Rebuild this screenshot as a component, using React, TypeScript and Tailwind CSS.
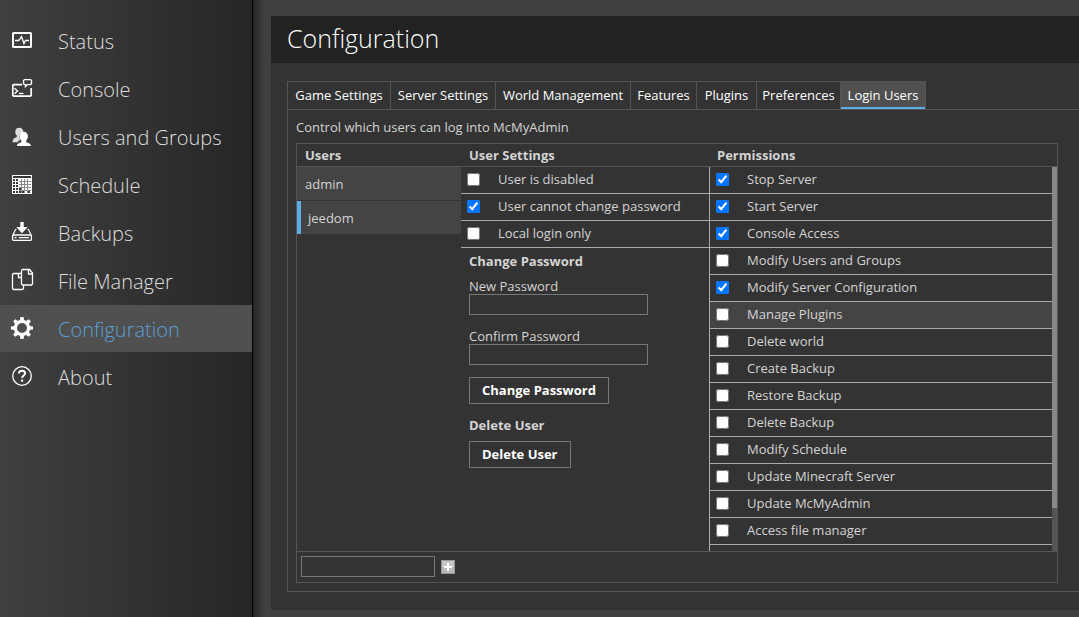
import { useState, type ReactNode } from "react";

type NavItem = { label: string; icon: ReactNode };

const iconClass = "mt-[11px] h-6 w-6 shrink-0 self-start text-white";

const StatusIcon = () => (
  <svg viewBox="0 0 24 24" className={iconClass} fill="none" stroke="currentColor" aria-hidden="true">
    <rect x="3" y="5" width="18" height="14" rx="0.5" strokeWidth="2" />
    <path d="M5 12.5h3.5l1.5-1.5 1.5-2.5 2.5 7 1.5-3H19" strokeWidth="1.3" />
  </svg>
);

const ConsoleIcon = () => (
  <svg viewBox="0 0 24 24" className={iconClass} fill="none" stroke="currentColor" aria-hidden="true">
    <path d="M12 8.6H3.6L2.8 9.400v10l.8.8h16.800l.8-.8V12" strokeWidth="1.700" />
    <path d="M14.500 3.600h6l1 1v3l-1 1h-3l-2 2v-2h-1l-1-1v-3z" strokeWidth="1.400" />
    <path d="M4.500 12.200l3 2.800-3 2.800" strokeWidth="1.400" />
    <path d="M9 17.500h4.500" strokeWidth="1.400" />
  </svg>
);

const UsersIcon = () => (
  <svg viewBox="0 0 24 24" className={iconClass} fill="currentColor" aria-hidden="true">
    <path className="text-[#dcdcdc]" d="M9.2 3.7c2.500 0 4.200 1.700 4.200 4.200-2.700.5-4.400 2.500-4 5.300.2 1.200.5 1.800 1 2.600-1.300.6-2.200 1.300-2.700 2.400H2.500c.1-2.300.8-3.700 2.300-4.300 1.500-.6 2.200-1 2.200-2.100C5.700 10.800 5.300 9.500 5.300 7.700c0-2.500 1.500-4 3.900-4z" />
    <path d="M13.500 7.800c2.700 0 4.400 1.800 4.400 4.500 0 1.800-.7 3.100-1.700 4.100v1c0 .8 1 1.100 2.200 1.700 1.500.6 2.300 1.300 2.500 2.900H6.900c.1-1.600 1-2.300 2.500-2.900 1.200-.5 1.900-.8 1.900-1.700v-1c-1-1-1.900-2.300-1.900-4.100 0-2.700 1.600-4.500 4.100-4.500z" />
  </svg>
);

const calendarRows = [
  [1, 1, 0, 0, 0, 0],
  [1, 1, 0, 0, 0, 0],
  [1, 1, 0, 0, 0, 0],
  [1, 1, 1, 0, 0, 0],
  [1, 1, 1, 1, 0, 1],
];

const ScheduleIcon = () => (
  <svg viewBox="0 0 24 24" className={iconClass} shapeRendering="crispEdges" aria-hidden="true">
    <path fill="currentColor" d="M2 3h20v19H2z" />
    <path fill="#383838" d="M3 4h18v2H3z" />
    <path stroke="#8c8c8c" fill="none" d="M11.500 7v14M14.500 7v14M17.500 7v14M9 9.500h12M9 12.500h12M9 15.500h12M9 18.500h12" />
    {calendarRows.map((row, y) =>
      row.map((dark, x) =>
        dark ? <rect key={`${x}-${y}`} x={3 + x * 3} y={7 + y * 3} width="2" height="2" fill="#383838" /> : null,
      ),
    )}
  </svg>
);

const BackupsIcon = () => (
  <svg viewBox="0 0 24 24" className={iconClass} fill="none" stroke="currentColor" aria-hidden="true">
    <path d="M10.300 2h3.400v5h4L12 13.300 6.300 7h4z" fill="currentColor" stroke="none" />
    <path d="M6.500 9.500H5.500L2.700 15.500M17.500 9.500h1l2.800 6" strokeWidth="1.200" />
    <rect x="2.600" y="15" width="18.800" height="5.400" rx="1.200" strokeWidth="1.300" />
    <path d="M4.500 17.700h2M9 17.700h10" strokeWidth="1.200" />
  </svg>
);

const FilesIcon = () => (
  <svg viewBox="0 0 24 24" className={iconClass} fill="none" stroke="currentColor" strokeWidth="1.300" aria-hidden="true">
    <path d="M11.500 5.500H3.500l-1 1v14l1 1h9l1-1v-3" />
    <path d="M8.500 5.500v4h3" />
    <path d="M12.500 1.500h7l3 3.500v11l-1 1h-9l-1-1v-13.500z" />
    <path d="M18.500 1.500V6h4" />
  </svg>
);

const teeth = [0, 45, 90, 135, 180, 225, 270, 315];

const GearIcon = () => (
  <svg viewBox="0 0 24 24" className={iconClass} fill="currentColor" aria-hidden="true">
    <circle cx="12" cy="12" r="6.600" fill="none" stroke="currentColor" strokeWidth="3.200" />
    {teeth.map((a) => (
      <path key={a} d="M9.900 4.500L10.500 1h3l.6 3.500z" transform={`rotate(${a} 12 12)`} />
    ))}
  </svg>
);

const AboutIcon = () => (
  <svg viewBox="0 0 24 24" className={iconClass} fill="none" stroke="currentColor" aria-hidden="true">
    <circle cx="12" cy="12" r="9.300" strokeWidth="1.300" />
    <path d="M8.900 9.600c0-1.900 1.200-2.900 3.100-2.900s3.100 1 3.100 2.600c0 2.200-3 2.200-3 4.700" strokeWidth="1.900" />
    <path d="M11 15.500h2.200v2.200H11z" fill="currentColor" stroke="none" />
  </svg>
);

const navItems: NavItem[] = [
  { label: "Status", icon: <StatusIcon /> },
  { label: "Console", icon: <ConsoleIcon /> },
  { label: "Users and Groups", icon: <UsersIcon /> },
  { label: "Schedule", icon: <ScheduleIcon /> },
  { label: "Backups", icon: <BackupsIcon /> },
  { label: "File Manager", icon: <FilesIcon /> },
  { label: "Configuration", icon: <GearIcon /> },
  { label: "About", icon: <AboutIcon /> },
];

const tabs = [
  { name: "Game Settings", width: "w-[103px]" },
  { name: "Server Settings", width: "w-[105px]" },
  { name: "World Management", width: "w-[135px]" },
  { name: "Features", width: "w-[66px]" },
  { name: "Plugins", width: "w-[60px]" },
  { name: "Preferences", width: "w-[84px]" },
  { name: "Login Users", width: "w-[86px]" },
];

const userSettings = [
  { label: "User is disabled", on: false },
  { label: "User cannot change password", on: true },
  { label: "Local login only", on: false },
];

const permissions = [
  { label: "Stop Server", on: true },
  { label: "Start Server", on: true },
  { label: "Console Access", on: true },
  { label: "Modify Users and Groups", on: false },
  { label: "Modify Server Configuration", on: true },
  { label: "Manage Plugins", on: false, active: true },
  { label: "Delete world", on: false },
  { label: "Create Backup", on: false },
  { label: "Restore Backup", on: false },
  { label: "Delete Backup", on: false },
  { label: "Modify Schedule", on: false },
  { label: "Update Minecraft Server", on: false },
  { label: "Update McMyAdmin", on: false },
  { label: "Access file manager", on: false },
];

function CheckRow({ label, on, active = false }: { label: string; on: boolean; active?: boolean }) {
  return (
    <label
      className={`flex h-[27px] shrink-0 items-center gap-[18px] border-b border-[#aaa] pl-1.5 hover:bg-[#444] ${
        active ? "bg-[#444]" : ""
      }`}
    >
      <input type="checkbox" defaultChecked={on} className="mb-0.5 h-[13px] w-[13px] shrink-0" />
      {label}
    </label>
  );
}

function PasswordField({ id, label }: { id: string; label: string }) {
  return (
    <div className="flex h-[50px] flex-col">
      <label htmlFor={id} className="leading-4">
        {label}
      </label>
      <input id={id} type="password" className="h-[21px] w-[179px] border border-[#777] bg-transparent px-1" />
    </div>
  );
}

function Sidebar() {
  return (
    <nav className="w-[253px] shrink-0 border-r border-black bg-linear-to-r from-[#404040] to-[#262626] pt-[17px]">
      <ul className="flex flex-col gap-px">
        {navItems.map(({ label, icon }) => {
          const current = label === "Configuration";
          return (
            <li key={label}>
              <a
                href="#"
                aria-current={current ? "page" : undefined}
                className={`flex h-[47px] items-center gap-6 pl-2.5 text-xl font-light ${
                  current ? "bg-[#505050] text-[#5b9fd6]" : "text-[#dedede]"
                }`}
              >
                {icon}
                <span className="pt-0.5">{label}</span>
              </a>
            </li>
          );
        })}
      </ul>
    </nav>
  );
}

export default function App() {
  const [tab, setTab] = useState("Login Users");
  const [user, setUser] = useState("jeedom");

  return (
    <div className="flex min-h-screen bg-[#404040] font-['Open_Sans','Noto_Sans',sans-serif] text-[13px] text-[#d4d4d4]">
      <Sidebar />
      <main className="min-w-0 flex-1 bg-linear-to-r from-[#262626] to-[#404040] to-[12px] pt-4 pb-[7px] pl-[18px]">
        <section className="bg-[#333] pb-[18px]">
          <h1 className="flex h-[47px] items-center bg-[#222] pb-0.5 pl-4 text-[25px] font-light text-white">
            Configuration
          </h1>
          <div className="pt-[18px] pl-4">
            <div role="tablist" className="flex h-7">
              {tabs.map(({ name, width }) => (
                <button
                  key={name}
                  type="button"
                  role="tab"
                  aria-selected={tab === name}
                  onClick={() => setTab(name)}
                  className={`shrink-0 border-t border-l border-[#555] pt-px text-center whitespace-nowrap text-white last:border-r ${width} ${
                    tab === name ? "bg-[#505050] shadow-[inset_0_-2px_#5dade2]" : ""
                  }`}
                >
                  {name}
                </button>
              ))}
            </div>
            <div role="tabpanel" className="border-y border-l border-[#555] pt-[7px] pr-[21px] pb-2 pl-2">
              <p className="pb-1.5 leading-5">Control which users can log into McMyAdmin</p>
              <div className="border border-[#555]">
                <div className="flex h-[23px] items-center border-b border-[#555] pt-0.5 font-bold">
                  <h2 className="w-[164px] pl-2">Users</h2>
                  <h2 className="w-[248px] pl-2">User Settings</h2>
                  <h2 className="flex-1 pl-2">Permissions</h2>
                </div>
                <div className="flex h-96">
                  <ul className="flex w-[164px] shrink-0 flex-col gap-px">
                    {["admin", "jeedom"].map((name) => (
                      <li key={name}>
                        <button
                          type="button"
                          onClick={() => setUser(name)}
                          className={`h-[33px] w-full bg-[#444] pt-0.5 text-left ${
                            user === name ? "border-l-4 border-[#5dade2] pl-[7px]" : "pl-2"
                          }`}
                        >
                          {name}
                        </button>
                      </li>
                    ))}
                  </ul>
                  <div className="w-[248px] shrink-0">
                    {userSettings.map((s) => (
                      <CheckRow key={s.label} {...s} />
                    ))}
                    <div className="flex flex-col items-start pt-[3px] pl-2">
                      <h3 className="pb-[7px] leading-5 font-bold">Change Password</h3>
                      <PasswordField id="new-password" label="New Password" />
                      <PasswordField id="confirm-password" label="Confirm Password" />
                      <div className="-mt-px flex flex-col items-start">
                        <button type="button" className="h-[27px] border border-[#777] px-3 font-bold text-white">
                          Change Password
                        </button>
                        <h3 className="pt-[11px] pb-1.5 leading-5 font-bold">Delete User</h3>
                        <button type="button" className="h-[27px] border border-[#777] px-3 font-bold text-white">
                          Delete User
                        </button>
                      </div>
                    </div>
                  </div>
                  <div className="flex min-w-0 flex-1 flex-col overflow-hidden border-l border-[#aaa]">
                    {permissions.map((p) => (
                      <CheckRow key={p.label} {...p} />
                    ))}
                  </div>
                  <div className="w-[5px] bg-[#555]">
                    <div className="h-[341px] bg-[#888]" />
                  </div>
                </div>
                <form
                  className="flex h-[31px] items-start gap-1.5 border-t border-[#555] pt-1 pl-1"
                  onSubmit={(e) => e.preventDefault()}
                >
                  <input
                    aria-label="New user name"
                    className="h-[21px] w-[134px] border border-[#777] bg-transparent px-1"
                  />
                  <button type="submit" aria-label="Add user" className="mt-1">
                    <svg viewBox="0 0 14 14" className="h-3.5 w-3.5" aria-hidden="true">
                      <path fill="#999" d="M0 0h14v14H0z" />
                      <path fill="#c8c8c8" d="M1 1h12v6H1z" />
                      <path fill="#b8b8b8" d="M1 7h12v6H1z" />
                      <path fill="#fff" d="M6 3h2v3h3v2H8v3H6V8H3V6h3z" />
                    </svg>
                  </button>
                </form>
              </div>
            </div>
          </div>
        </section>
      </main>
    </div>
  );
}
